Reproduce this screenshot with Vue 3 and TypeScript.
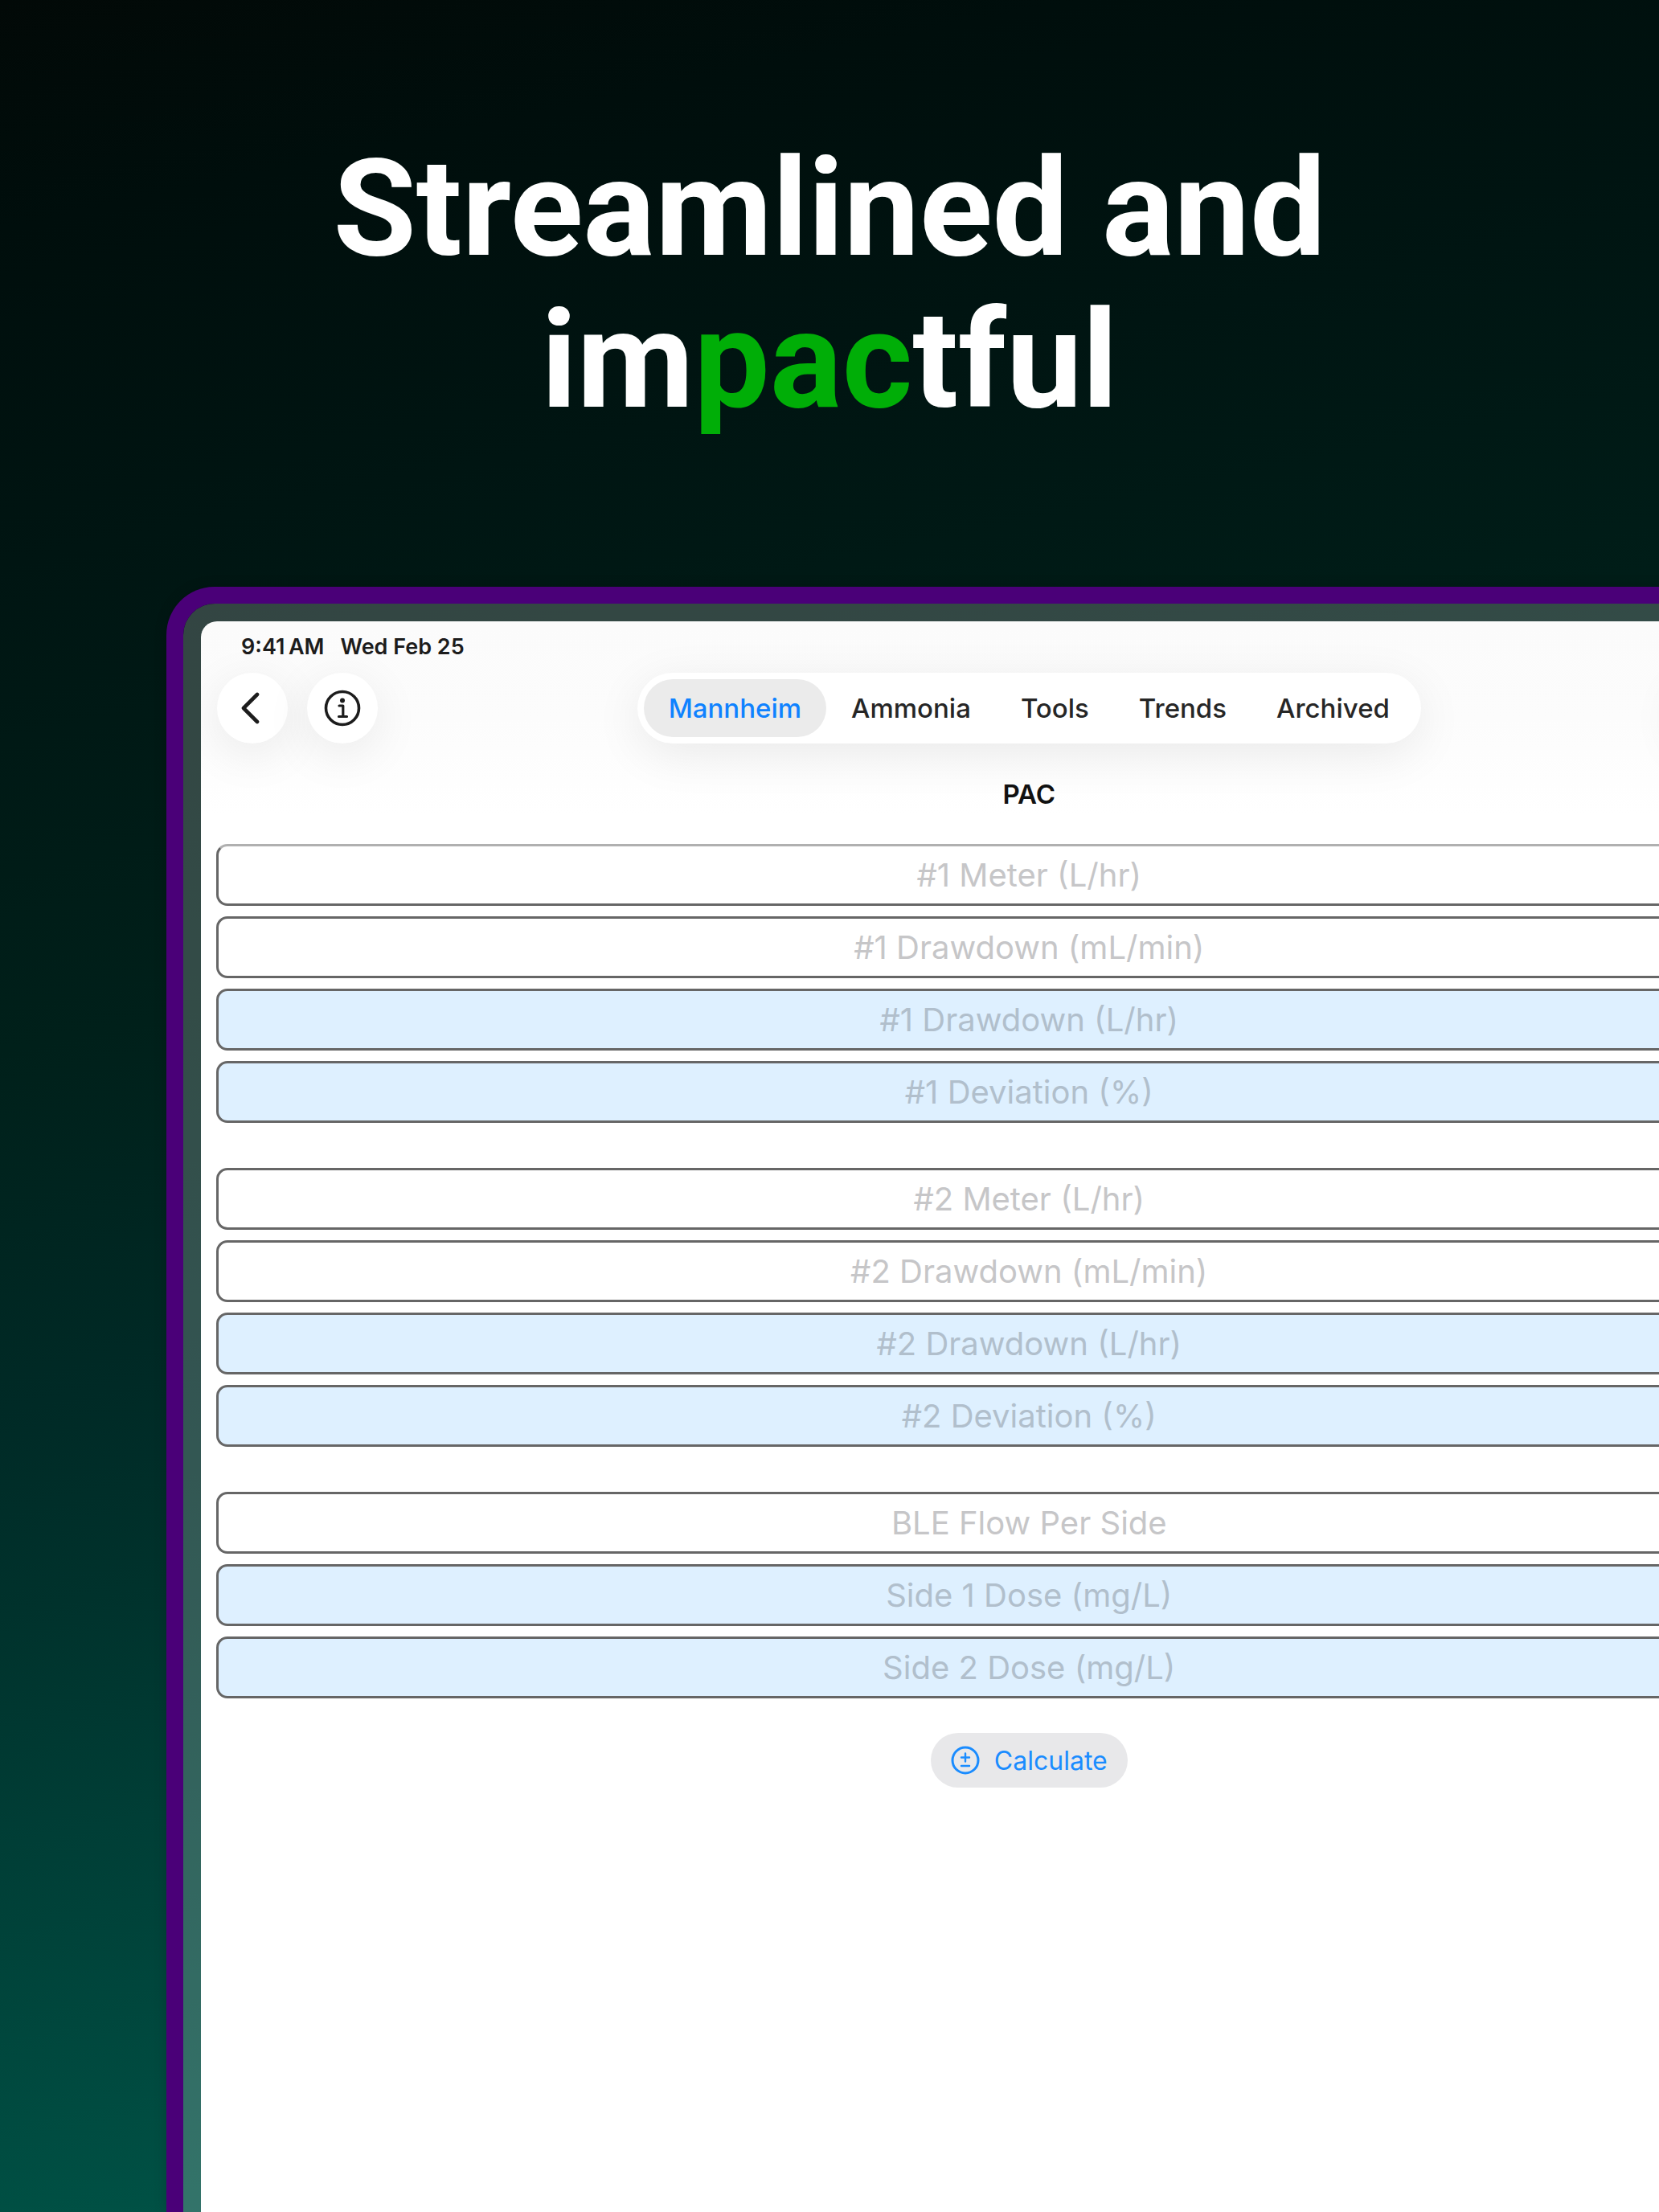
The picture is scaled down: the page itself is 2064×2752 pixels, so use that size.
<script setup lang="ts">
import { ref } from 'vue'

interface Field {
  id: string
  label: string
  output?: boolean
}

const tabs: string[] = ['Mannheim', 'Ammonia', 'Tools', 'Trends', 'Archived']
const activeTab = ref<string>('Mannheim')

const groups: Field[][] = [
  [
    { id: 'meter-1', label: '#1 Meter (L/hr)' },
    { id: 'drawdown-ml-1', label: '#1 Drawdown (mL/min)' },
    { id: 'drawdown-l-1', label: '#1 Drawdown (L/hr)', output: true },
    { id: 'deviation-1', label: '#1 Deviation (%)', output: true },
  ],
  [
    { id: 'meter-2', label: '#2 Meter (L/hr)' },
    { id: 'drawdown-ml-2', label: '#2 Drawdown (mL/min)' },
    { id: 'drawdown-l-2', label: '#2 Drawdown (L/hr)', output: true },
    { id: 'deviation-2', label: '#2 Deviation (%)', output: true },
  ],
  [
    { id: 'ble-flow', label: 'BLE Flow Per Side' },
    { id: 'dose-1', label: 'Side 1 Dose (mg/L)', output: true },
    { id: 'dose-2', label: 'Side 2 Dose (mg/L)', output: true },
  ],
]
</script>

<template>
  <main class="poster">
    <h1 class="headline">
      Streamlined and<br />im<span class="accent">pac</span>tful
    </h1>

    <section class="device">
      <div class="screen">
        <div class="status">
          <span>9:41&#8201;AM</span>
          <span>Wed Feb 25</span>
        </div>

        <header class="toolbar">
          <div class="side">
            <button class="round" type="button" aria-label="Back">
              <svg width="28" height="42" viewBox="0 0 28 42" fill="none" stroke="#1c1c1c" stroke-width="4.600" stroke-linecap="round" stroke-linejoin="round">
                <path d="M20 4 L3 21 L20 38" />
              </svg>
            </button>
            <button class="round" type="button" aria-label="Information">
              <svg width="46" height="46" viewBox="0 0 46 46" fill="none" stroke="#1c1c1c" stroke-width="3.600">
                <circle cx="23" cy="23" r="20.5" />
                <circle cx="23" cy="13.5" r="3" fill="#1c1c1c" stroke="none" />
                <path d="M19 20 H23.800 V33.500 M18.500 33.500 H28.500" stroke-width="3.200" stroke-linecap="round" stroke-linejoin="round" />
              </svg>
            </button>
          </div>

          <nav class="tabs" aria-label="Sections">
            <button
              v-for="tab in tabs"
              :key="tab"
              type="button"
              class="tab"
              :class="{ active: tab === activeTab }"
              @click="activeTab = tab"
            >
              {{ tab }}
            </button>
          </nav>

          <div class="side end">
            <span class="tray"></span>
          </div>
        </header>

        <h2 class="title">PAC</h2>

        <form class="form" @submit.prevent>
          <div v-for="(group, index) in groups" :key="index" class="group">
            <input
              v-for="field in group"
              :id="field.id"
              :key="field.id"
              class="field"
              :class="{ output: field.output }"
              type="text"
              :placeholder="field.label"
              :aria-label="field.label"
              :readonly="field.output"
            />
          </div>

          <button class="calculate" type="submit">
            <svg width="36" height="36" viewBox="0 0 36 36" fill="none" stroke="#1a8cff" stroke-linecap="round">
              <circle cx="18" cy="18" r="16" stroke-width="3" />
              <path d="M18 9.500 V19.500 M13 14.500 H23 M13 25 H23" stroke-width="2.400" />
            </svg>
            Calculate
          </button>
        </form>
      </div>
    </section>
  </main>
</template>

<style>
body {
  margin: 0;
}
</style>

<style scoped>
.poster {
  display: flex;
  flex-direction: column;
  box-sizing: border-box;
  height: 100vh;
  overflow: hidden;
  padding-top: 165px;
  background: linear-gradient(168deg, #020907 0%, #000e0c 9%, #001512 22%, #00201a 41%, #002a26 55%, #00322c 63%, #003e36 72%, #005044 87%, #006253 100%);
  font-family: Inter, "Liberation Sans", sans-serif;
}

.headline {
  margin: 0 0 187px;
  color: #fff;
  font-family: Roboto, "Liberation Sans", sans-serif;
  font-size: 168px;
  font-weight: 700;
  line-height: 189px;
  text-align: center;
}

.accent {
  color: #00ae07;
}

.device {
  display: flex;
  flex: 1;
  flex-shrink: 0;
  box-sizing: border-box;
  width: 104%;
  margin-left: 207px;
  padding: 22px 22px 0;
  border: 21px solid #4a0078;
  border-bottom: 0;
  border-radius: 60px 60px 0 0;
  background: rgba(255, 255, 255, 0.2) padding-box;
  box-shadow: 0 0 16px rgba(0, 0, 0, 0.15);
}

.screen {
  flex: 1;
  min-width: 0;
  overflow: hidden;
  border-radius: 20px 20px 0 0;
  background: linear-gradient(#fbfbfb 0, #fcfcfc 120px, #fff 240px);
}

.status {
  display: flex;
  gap: 20px;
  padding: 16px 50px 0;
  color: #1c1c1c;
  font-size: 27px;
  font-weight: 600;
  line-height: 32px;
}

.toolbar {
  display: flex;
  align-items: center;
  justify-content: space-between;
  padding: 16px 20px 0;
}

.side {
  display: flex;
  flex: 1;
  gap: 24px;
}

.side.end {
  justify-content: flex-end;
}

.round,
.tabs,
.tray {
  border: 0;
  border-radius: 44px;
  background: #fff;
  box-shadow: 0 14px 60px rgba(0, 0, 0, 0.08);
}

.round {
  display: flex;
  align-items: center;
  justify-content: center;
  width: 88px;
  height: 88px;
  padding: 0;
}

.tray {
  width: 208px;
  height: 88px;
}

.tabs {
  display: flex;
  box-sizing: border-box;
  height: 88px;
  padding: 8px;
}

.tab {
  padding: 0 31px;
  border: 0;
  border-radius: 36px;
  background: transparent;
  color: #262626;
  font-family: inherit;
  font-size: 33px;
  font-weight: 500;
  line-height: 72px;
}

.tab.active {
  background: #ebebeb;
  color: #0f82ff;
}

.title {
  margin: 43px 0 0;
  color: #111;
  font-size: 33px;
  font-weight: 600;
  line-height: 40px;
  text-align: center;
}

.form {
  display: flex;
  flex-direction: column;
  align-items: center;
  gap: 56px;
  padding: 42px 19px 0;
}

.group {
  display: flex;
  flex-direction: column;
  gap: 13px;
  width: 100%;
}

.field {
  box-sizing: border-box;
  width: 100%;
  height: 77px;
  padding: 0;
  border: 3px solid #666;
  border-radius: 14px;
  background: #fff;
  color: #1c1c1c;
  font-family: inherit;
  font-size: 40px;
  text-align: center;
}

.group:first-child .field:first-child {
  border-top-color: #b0b0b0;
}

.field.output {
  background: #def0ff;
}

.field::placeholder {
  color: #c6c6c8;
  opacity: 1;
}

.field.output::placeholder {
  color: #b1bfcc;
}

.calculate {
  display: flex;
  align-items: center;
  gap: 18px;
  height: 68px;
  margin-top: -13px;
  padding: 0 25px;
  border: 0;
  border-radius: 34px;
  background: #e8e8ea;
  color: #1a8cff;
  font-family: inherit;
  font-size: 32px;
}
</style>
